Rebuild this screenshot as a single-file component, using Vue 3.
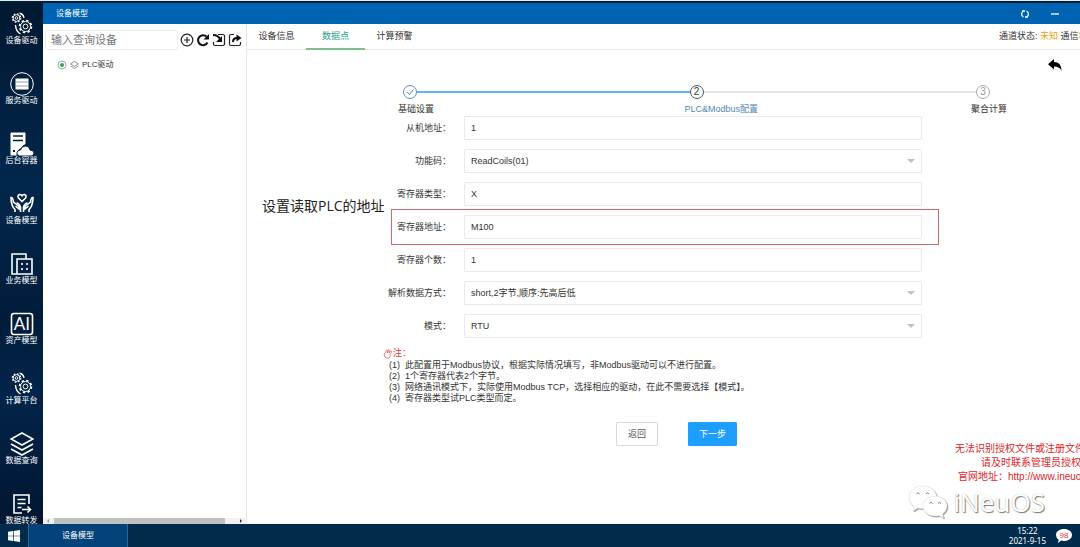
<template>
  <div class="desktop">
    <div class="workspace">
      <nav class="dock">
        <a v-for="item in dockItems" :key="item.label" class="dock-item" href="#">
          <svg v-if="item.icon === 'gears'" class="dock-icon" viewBox="0 0 24 24">
            <circle cx="6.500" cy="6" r="3.400" />
            <circle cx="6.500" cy="6" r="1.300" />
            <circle cx="6.500" cy="6" r="4.200" class="teeth-small" />
            <circle cx="15.500" cy="14.500" r="5" />
            <circle cx="15.500" cy="14.500" r="2.400" />
            <circle cx="15.500" cy="14.500" r="6" class="teeth" />
            <path d="M9.500 1.200c2.500.3 4 2.200 4.500 4.600M5.500 13c.2 4 1.600 7 5 9" class="arc" />
          </svg>
          <svg v-else-if="item.icon === 'service'" class="dock-icon" viewBox="0 0 24 24">
            <circle cx="12" cy="12" r="11.300" />
            <rect x="5" y="6" width="14" height="12" class="solid" />
            <path d="M6 10h12M6 14h12" class="cut" />
          </svg>
          <svg v-else-if="item.icon === 'cloud'" class="dock-icon" viewBox="0 0 24 24">
            <path d="M0 1.500Q0 0 1.500 0h13Q16 0 16 1.500v11q-3.500.5-4.500 4-4.500 1-4.500 7.500H1.500Q0 24 0 22.500z" class="solid" />
            <path d="M3 4h10M3 8.500h10" class="cut thick" />
            <path d="M9.500 24q-3-1-2.500-3.500.5-2.500 3.500-2.500 1-4 5-4 4 0 4.500 4 4 .3 4 3 0 2.500-3 3z" class="solid" />
            <rect x="3" y="18" width="2" height="2" class="dark" />
          </svg>
          <svg v-else-if="item.icon === 'hands'" class="dock-icon" viewBox="0 0 24 24">
            <path d="M12 9.500 8.500 6q-1.500-2.500 1-3.500 1.500-.3 2.500 1.200 1-1.500 2.500-1.200 2.500 1 1 3.500z" class="heavy" />
            <path d="M5 20v-2.500Q1 14 1 5.500q2 0 2.500 4.500l5 4q1.500 1.500.5 3l-3.500-3M10.500 20v-5q-1.500-4-4-4M19 20v-2.500Q23 14 23 5.500q-2 0-2.500 4.500l-5 4q-1.500 1.500-.5 3l3.500-3M13.500 20v-5q1.500-4 4-4" class="heavy" />
          </svg>
          <svg v-else-if="item.icon === 'building'" class="dock-icon" viewBox="0 0 24 24">
            <path d="M7 22H2V2h14v5M7 22V7h15v15z" class="heavy" />
            <path d="M12 11v2M17 11v2M12 16v2M17 16v2" class="heavy" />
          </svg>
          <svg v-else-if="item.icon === 'ai'" class="dock-icon" viewBox="0 0 24 24">
            <rect x="1.500" y="1.500" width="21" height="21" rx="2.500" class="heavy" />
            <text x="12" y="18" text-anchor="middle" class="ai-text">AI</text>
          </svg>
          <svg v-else-if="item.icon === 'layers'" class="dock-icon" viewBox="0 0 24 24">
            <path d="M12 1 23 7 12 13 1 7zM1 12l11 6 11-6M1 17l11 6 11-6" class="heavy" />
          </svg>
          <svg v-else class="dock-icon" viewBox="0 0 24 24">
            <path d="M19 12V3H4v18h8M7.500 7.500h8M7.500 11.500h8M7.500 15.500h4M12 17.500h8M17.500 14.500l3 3-3 3" class="heavy" />
          </svg>
          <span>{{ item.label }}</span>
        </a>
      </nav>

      <section class="window">
        <header class="title-bar">
          <span class="title">设备模型</span>
          <button class="win-btn" type="button" aria-label="刷新">
            <svg viewBox="0 0 10 10"><path d="M3.500 8A3.300 3.300 0 0 1 3.500 2M6.500 2A3.300 3.300 0 0 1 6.500 8M2 2h3M8 8H5" /></svg>
          </button>
          <button class="win-btn" type="button" aria-label="最小化">
            <svg viewBox="0 0 10 10"><path d="M1 5h8" /></svg>
          </button>
        </header>

        <div class="window-body">
          <aside class="device-panel">
            <div class="search-row">
              <input v-model="keyword" class="search" type="text" placeholder="输入查询设备" aria-label="输入查询设备">
              <button class="tool" type="button" aria-label="添加">
                <svg viewBox="0 0 14 14"><circle cx="7" cy="7" r="5.800" /><path d="M7 4v6M4 7h6" /></svg>
              </button>
              <button class="tool" type="button" aria-label="刷新">
                <svg viewBox="0 0 14 14"><path d="M11.500 9.500A5 5 0 1 1 10.500 3.500" class="bold" /><path d="M13 1v5.500H7.500z" class="fill" /></svg>
              </button>
              <button class="tool" type="button" aria-label="导入">
                <svg viewBox="0 0 14 14"><path d="M6 1.500h5q1.500 0 1.500 1.500v8q0 1.500-1.500 1.500H3q-1.500 0-1.500-1.500V9" /><path d="M1 2q5 0 7 4" class="bold" /><path d="M10 3v6H4z" class="fill" /></svg>
              </button>
              <button class="tool" type="button" aria-label="导出">
                <svg viewBox="0 0 14 14"><path d="M6 1.500H3Q1.500 1.500 1.500 3v8q0 1.500 1.500 1.500h8q1.500 0 1.500-1.500V9" /><path d="M5 9q0-4 4-4" class="bold" /><path d="M8.500 1.500 13.500 5l-5 3.500z" class="fill" /></svg>
              </button>
            </div>
            <div class="tree-node">
              <svg class="node-status" viewBox="0 0 10 10"><circle cx="5" cy="5" r="4" /><circle cx="5" cy="5" r="2" class="dot" /></svg>
              <svg class="node-icon" viewBox="0 0 10 10"><path d="M5 1 9.300 3.800 5 6.500.7 3.800zM.7 6 5 9l4.300-3" /></svg>
              <span>PLC驱动</span>
            </div>
            <div class="h-scroll">
              <svg viewBox="0 0 6 6"><path d="M4 1 2 3l2 2z" /></svg>
              <div class="thumb"></div>
              <svg viewBox="0 0 6 6"><path d="M2 1l2 2-2 2z" class="on" /></svg>
            </div>
          </aside>

          <main class="content">
            <div class="tab-bar">
              <button
                v-for="tab in tabs"
                :key="tab"
                class="tab"
                :class="{ active: tab === activeTab }"
                type="button"
                @click="activeTab = tab"
              >{{ tab }}</button>
              <p class="channel">通道状态: <b>未知</b> 通信<b>状</b></p>
            </div>

            <div class="back-row">
              <button class="back" type="button" aria-label="后退">
                <svg viewBox="0 0 14 12"><path d="M6 0v3q7.500 0 7.500 9Q12 7.500 6 7.500v3L0 5.200z" /></svg>
              </button>
            </div>

            <ol class="steps">
              <li v-for="(step, i) in steps" :key="step" class="step" :class="stepClass(i)">
                <span class="step-mark">
                  <svg v-if="i < currentStep" viewBox="0 0 10 10"><path d="M2 5l2.500 2.500L8.500 2.500" /></svg>
                  <template v-else>{{ i + 1 }}</template>
                </span>
                <span class="step-label">{{ step }}</span>
              </li>
            </ol>

            <form class="config-form" @submit.prevent>
              <div v-for="field in fields" :key="field.id" class="row" :class="{ marked: field.marked }">
                <label :for="field.id">{{ field.label }}：</label>
                <div v-if="field.select" class="select-wrap">
                  <select :id="field.id" v-model="field.value">
                    <option :value="field.value">{{ field.value }}</option>
                  </select>
                </div>
                <input v-else :id="field.id" v-model="field.value" type="text">
              </div>
              <p class="callout">设置读取PLC的地址</p>
            </form>

            <div class="notes">
              <p class="notes-title">
                <svg viewBox="0 0 10 10"><path d="M1 5l2-1.500V1.500q1-1 1.500 0V4l1-3q1-.8 1.300.3L6 4l2-2q1 0 .7 1L7 5.500Q8 9 4.500 9.300 1 9 1 5z" /></svg>注：
              </p>
              <ul>
                <li v-for="(note, i) in notes" :key="note"><span>({{ i + 1 }})</span>{{ note }}</li>
              </ul>
            </div>

            <div class="actions">
              <button class="btn" type="button">返回</button>
              <button class="btn primary" type="button">下一步</button>
            </div>

            <div class="license">
              <p>无法识别授权文件或注册文件</p>
              <p class="second">请及时联系管理员授权</p>
              <p class="third">官网地址：http://www.ineuos</p>
            </div>

            <div class="watermark">
              <svg viewBox="0 0 40 34">
                <path d="M15 1C6.500 1 1 6 1 12.500c0 4 2 7 5 9L5 26l5-3q3 1 6 .7L28.500 11C27.500 5 22 1 15 1z" />
                <path d="M27 11c7 0 12 4.500 12 10 0 3.500-1.800 6-4.500 8l1 4-4.500-2.500q-2 .5-4 .5c-7 0-12-4.500-12-10s5-10 12-10z" />
                <path d="M8.500 9q1.500-2.500 3 0M18 9q1.500-2.500 3 0M21.500 18.500q1.500-2.500 3 0M30 18.500q1.500-2.500 3 0" class="eyes" />
              </svg>
              <span>iNeuOS</span>
            </div>
          </main>
        </div>
      </section>
    </div>

    <footer class="taskbar">
      <button class="start" type="button" aria-label="开始">
        <svg viewBox="0 0 12 12"><path d="M0 1.700 5 1v4.700H0zM5.700.9 12 0v5.700H5.700zM0 6.300h5V11l-5-.7zM5.700 6.300H12V12l-6.300-.9z" /></svg>
      </button>
      <button class="task" type="button">设备模型</button>
      <div class="clock">
        <span>15:22</span>
        <span>2021-9-15</span>
      </div>
      <div class="messages">
        <svg viewBox="0 0 16 14"><path d="M8 0c4.500 0 8 2.500 8 6s-3.500 6-8 6q-1.500 0-3-.4L2 14l.6-3.500Q0 9 0 6c0-3.500 3.500-6 8-6z" /></svg>
        <span>98</span>
      </div>
    </footer>
  </div>
</template>

<script setup>
import { ref } from 'vue'

const dockItems = [
  { label: '设备驱动', icon: 'gears' },
  { label: '服务驱动', icon: 'service' },
  { label: '后台容器', icon: 'cloud' },
  { label: '设备模型', icon: 'hands' },
  { label: '业务模型', icon: 'building' },
  { label: '资产模型', icon: 'ai' },
  { label: '计算平台', icon: 'gears' },
  { label: '数据查询', icon: 'layers' },
  { label: '数据转发', icon: 'forward' }
]

const keyword = ref('')
const tabs = ['设备信息', '数据点', '计算预警']
const activeTab = ref('数据点')

const steps = ['基础设置', 'PLC&Modbus配置', '聚合计算']
const currentStep = ref(1)

const fields = ref([
  { id: 'slave', label: '从机地址', value: '1' },
  { id: 'func', label: '功能码', value: 'ReadCoils(01)', select: true },
  { id: 'regType', label: '寄存器类型', value: 'X' },
  { id: 'regAddr', label: '寄存器地址', value: 'M100', marked: true },
  { id: 'regCount', label: '寄存器个数', value: '1' },
  { id: 'parse', label: '解析数据方式', value: 'short,2字节,顺序:先高后低', select: true },
  { id: 'mode', label: '模式', value: 'RTU', select: true }
])

const notes = [
  '此配置用于Modbus协议，根据实际情况填写，非Modbus驱动可以不进行配置。',
  '1个寄存器代表2个字节。',
  '网络通讯模式下，实际使用Modbus TCP，选择相应的驱动，在此不需要选择【模式】。',
  '寄存器类型试PLC类型而定。'
]

const stepClass = (i) => {
  if (i < currentStep.value) return 'done'
  return i === currentStep.value ? 'current' : 'waiting'
}
</script>

<style>
body {
  margin: 0;
  overflow: hidden;
}
</style>

<style scoped>
.desktop {
  display: flex;
  flex-direction: column;
  height: 100vh;
  box-sizing: border-box;
  border-top: 1px solid #e4ece6;
  background: #02203d;
  color: #333;
  font-family: "Liberation Sans", "Noto Sans CJK SC", sans-serif;
  font-size: 9px;
  line-height: 12px;
  overflow: hidden;
}

p,
ul,
ol {
  margin: 0;
  padding: 0;
  list-style: none;
}

button,
input,
select {
  margin: 0;
  padding: 0;
  border: 0;
  background: none;
  color: inherit;
  font: inherit;
}

button {
  cursor: pointer;
}

svg {
  display: block;
  fill: none;
}

.workspace {
  display: flex;
  flex: 1;
  min-height: 0;
  padding-top: 2px;
}

/* left dock */
.dock {
  display: flex;
  flex-direction: column;
  flex: none;
  gap: 23px;
  width: 43px;
  padding-top: 9px;
  box-sizing: border-box;
  overflow: hidden;
  background: linear-gradient(#011831, #02274c 35%, #011c3b 60%, #02244a 75%, #011631);
}

.dock-item {
  display: flex;
  flex-direction: column;
  flex: none;
  align-items: center;
  height: 37px;
  color: #fff;
  font-size: 8px;
  line-height: 10px;
  text-decoration: none;
  white-space: nowrap;
}

.dock-icon {
  width: 24px;
  height: 24px;
  stroke: #fff;
  stroke-width: 1;
}

.dock-icon .heavy {
  stroke-width: 1.6;
}

.dock-icon .arc {
  stroke-width: 1.4;
}

.dock-icon .teeth {
  stroke-width: 1.6;
  stroke-dasharray: 2.4 2.3;
}

.dock-icon .teeth-small {
  stroke-width: 1.2;
  stroke-dasharray: 1.6 1.7;
}

.dock-icon .solid {
  fill: #fff;
  stroke: #02203d;
}

.dock-icon .dark {
  fill: #02203d;
  stroke: none;
}

.dock-icon .cut {
  stroke: #8fa0b2;
}

.dock-icon .thick {
  stroke: #02203d;
  stroke-width: 1.6;
}

.ai-text {
  fill: #fff;
  stroke: none;
  font-family: Lato, sans-serif;
  font-size: 17px;
}

/* window */
.window {
  display: flex;
  flex: 1;
  flex-direction: column;
  min-width: 0;
  background: #fff;
}

.title-bar {
  display: flex;
  align-items: center;
  flex: none;
  gap: 20px;
  height: 21px;
  padding: 0 20px 0 13px;
  background: #0063b1;
  color: #fff;
  font-size: 8px;
}

.title {
  flex: 1;
}

.win-btn svg {
  width: 10px;
  height: 10px;
  stroke: #fff;
  stroke-width: 1.3;
}

.window-body {
  display: flex;
  flex: 1;
  min-height: 0;
}

.device-panel {
  display: flex;
  flex: none;
  flex-direction: column;
  width: 204px;
  box-sizing: border-box;
  border-right: 1px solid #e6e6e6;
}

.search-row {
  display: flex;
  align-items: center;
  gap: 2px;
  padding: 6px 4px 0 2px;
}

.search {
  flex: 1;
  min-width: 0;
  height: 20px;
  padding: 0 5px;
  box-sizing: border-box;
  border: 1px solid #eee;
  border-radius: 2px;
  font-size: 11px;
}

.search::placeholder {
  color: #777;
}

.tool svg {
  width: 14px;
  height: 14px;
  stroke: #222;
  stroke-width: 1.2;
}

.tool .bold {
  stroke: #111;
  stroke-width: 2;
}

.tool .fill {
  fill: #111;
  stroke: none;
}

.tree-node {
  display: flex;
  align-items: center;
  gap: 3px;
  padding: 9px 14px;
  font-size: 8px;
}

.node-status {
  width: 10px;
  height: 10px;
  stroke: #7a9a8a;
  stroke-width: 0.8;
}

.node-status .dot {
  fill: #2eaa3c;
  stroke: none;
}

.node-icon {
  width: 9px;
  height: 10px;
  stroke: #666;
  stroke-width: 0.8;
}

.h-scroll {
  display: flex;
  align-items: center;
  gap: 3px;
  height: 6px;
  margin-top: auto;
  padding: 0 2px;
  background: #f1f1f1;
}

.h-scroll svg {
  width: 6px;
  height: 6px;
  fill: #999;
}

.h-scroll .on {
  fill: #333;
}

.thumb {
  flex: 1;
  height: 6px;
  margin-right: 10px;
  background: #c1c1c1;
}

/* content */
.content {
  position: relative;
  flex: 1;
  min-width: 0;
  overflow: hidden;
}

.tab-bar {
  display: flex;
  height: 25px;
  border-bottom: 1px solid #e8e8e8;
}

.tab {
  flex: none;
  width: 59px;
  height: 26px;
  box-sizing: border-box;
  border-bottom: 2px solid transparent;
}

.tab.active {
  border-bottom-color: #7cc08b;
  color: #26a08c;
}

.channel {
  width: 81px;
  margin-left: auto;
  overflow: hidden;
  line-height: 25px;
  white-space: nowrap;
}

.channel b {
  color: #e6a117;
  font-weight: normal;
}

.back-row {
  display: flex;
  justify-content: flex-end;
  padding: 9px 18px 0 0;
}

.back svg {
  width: 14px;
  height: 12px;
  fill: #000;
}

.steps {
  display: flex;
  padding: 14px 73px 0 151px;
}

.step {
  display: flex;
  position: relative;
  flex: 1;
  flex-direction: column;
  gap: 4px;
}

.step:last-child {
  flex: none;
}

.step:not(:last-child)::before {
  content: "";
  position: absolute;
  top: 6px;
  right: -5px;
  left: 19px;
  height: 2px;
  background: #e2e2e2;
}

.step.done::before {
  background: #5fb3f3;
}

.step-mark {
  display: flex;
  align-items: center;
  justify-content: center;
  width: 14px;
  height: 14px;
  margin-left: 5px;
  box-sizing: border-box;
  border: 1px solid #555;
  border-radius: 50%;
  font-size: 10px;
}

.step-mark svg {
  width: 10px;
  height: 10px;
  stroke: #4b86b8;
}

.done .step-mark {
  border-color: #5c8fc0;
}

.waiting .step-mark {
  border-color: #aaa;
  color: #999;
}

.step-label {
  white-space: nowrap;
}

.current .step-label {
  color: #5389b0;
}

.config-form {
  display: flex;
  position: relative;
  flex-direction: column;
  gap: 9px;
  padding: 1px 158px 0 140px;
}

.row {
  display: flex;
  position: relative;
  align-items: center;
  gap: 13px;
}

.row label {
  flex: none;
  width: 64px;
  text-align: right;
  white-space: nowrap;
}

.row > input,
.select-wrap {
  flex: 1;
  min-width: 0;
  height: 24px;
  box-sizing: border-box;
  border: 1px solid #eaeaea;
  border-radius: 1px;
}

.row > input,
.row select {
  padding: 0 6px;
}

.select-wrap {
  position: relative;
}

.row select {
  width: 100%;
  height: 22px;
  appearance: none;
}

.select-wrap::after {
  content: "";
  position: absolute;
  top: 9px;
  right: 6px;
  border: 4px solid transparent;
  border-top-color: #c2c2c2;
  border-bottom: 0;
  pointer-events: none;
}

/* frame drawn around the row being explained */
.row.marked::after {
  content: "";
  position: absolute;
  inset: -6px -17px -6px 4px;
  border: 1px solid #d9686c;
  pointer-events: none;
}

.callout {
  position: absolute;
  top: 81px;
  left: 15px;
  color: #222;
  font-family: "Open Sans", "Noto Sans CJK SC", sans-serif;
  font-size: 14px;
  line-height: 20px;
}

.notes {
  padding: 10px 0 0 136px;
  line-height: 11px;
  white-space: nowrap;
}

.notes-title {
  display: flex;
  align-items: center;
  padding-bottom: 1px;
  color: #e0383e;
}

.notes-title svg {
  width: 10px;
  height: 10px;
  stroke: #e0383e;
  stroke-width: 0.6;
}

.notes li {
  display: flex;
  gap: 5px;
  padding-left: 6px;
}

.actions {
  display: flex;
  gap: 30px;
  padding: 18px 0 0 369px;
}

.btn {
  height: 24px;
  padding: 0 11px;
  box-sizing: border-box;
  border: 1px solid #d9d9d9;
  border-radius: 1px;
  color: #555;
}

.btn.primary {
  padding: 0 10px;
  border-color: #1e9fff;
  background: #1e9fff;
  color: #fff;
}

.license {
  position: absolute;
  right: 0;
  bottom: 40px;
  width: 125px;
  overflow: hidden;
  color: #e0252b;
  font-size: 10px;
  line-height: 14px;
  white-space: nowrap;
}

.license .second {
  padding-left: 26px;
}

.license .third {
  padding-left: 3px;
}

.watermark {
  display: flex;
  position: absolute;
  right: 35px;
  bottom: 4px;
  align-items: center;
  gap: 5px;
  color: #fff;
  font-family: "Noto Sans", sans-serif;
  font-size: 26px;
  line-height: 36px;
  text-shadow: 1px 1px 1px #777, 0 0 1px #aaa;
}

.watermark svg {
  width: 40px;
  height: 34px;
  fill: #fff;
  stroke: #ddd;
  stroke-width: 0.6;
  filter: drop-shadow(1px 1px 0 #999);
}

.watermark .eyes {
  fill: none;
  stroke: #777;
  stroke-width: 1;
}

/* taskbar */
.taskbar {
  display: flex;
  flex: none;
  height: 23px;
  background: #002b4d;
  color: #fff;
  font-size: 8px;
}

.start {
  display: flex;
  align-items: center;
  justify-content: center;
  width: 28px;
}

.start svg {
  width: 12px;
  height: 12px;
  fill: #fff;
}

.task {
  width: 100px;
  box-sizing: border-box;
  border: 1px solid #2a6796;
  border-width: 0 1px;
  background: #04427a;
}

.clock {
  display: flex;
  flex-direction: column;
  justify-content: center;
  margin-left: auto;
  font-family: "Noto Sans", sans-serif;
  line-height: 10px;
  text-align: center;
}

.messages {
  display: grid;
  place-items: center;
  width: 16px;
  margin: 0 8px 0 10px;
}

.messages svg,
.messages span {
  grid-area: 1 / 1;
}

.messages svg {
  width: 16px;
  height: 14px;
  fill: #fff;
}

.messages span {
  color: #e0383e;
  line-height: 10px;
}
</style>
